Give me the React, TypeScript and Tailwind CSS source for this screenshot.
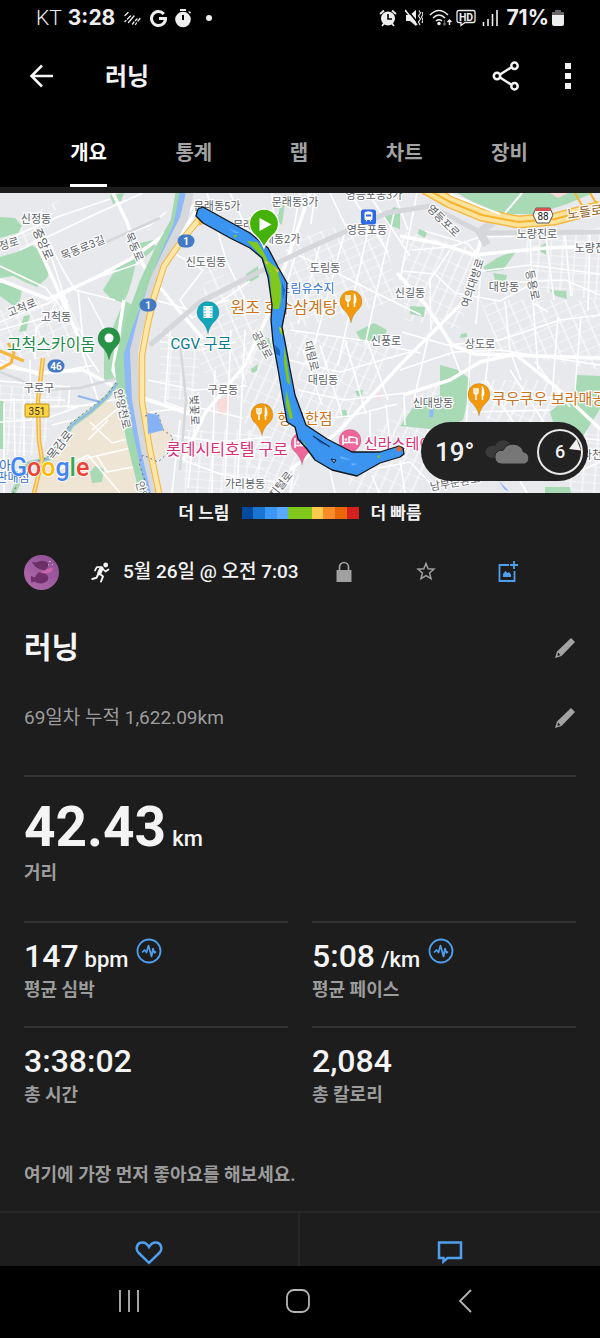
import React from "react";

type Point = { x: number; y: number };

const FONT = "font-['Roboto','Noto_Sans_CJK_KR',sans-serif]";

const TABS = ["개요", "통계", "랩", "차트", "장비"];

const PACE_COLORS = ["bg-[#004a9e]", "bg-[#1974d2]", "bg-[#3b96f4]", "bg-[#58a9ff]", "bg-[#80c81c]", "bg-[#80c81c]", "bg-[#fccb4d]", "bg-[#f98b28]", "bg-[#e9660c]", "bg-[#d3211f]"];

/* ---------- Map ---------- */

const PARKS = [
  "M0 217L15 218 22 226 18 233 0 238Z",
  "M0 257L17 252 32 245 43 253 50 270 47 278 37 287 27 283 13 276 0 278Z",
  "M0 283L13 283 22 290 20 300 15 307 0 296Z",
  "M103 290L117 267 137 258 132 280 128 293 123 303 110 298Z",
  "M110 195L124 193 121 201 113 204Z",
  "M140 243L153 240 156 247 140 262Z",
  "M24 316L30 315 26 331 19 332Z",
  "M104 350L124 300 132 305 116 345 117 377 104 381Z",
  "M457 193L593 193 567 204 536 214 505 214 485 209Z",
  "M483 267L497 258 518 249 503 270 487 272Z",
  "M493 273L507 275 505 283 496 283Z",
  "M440 365L458 370 470 379 470 392 463 420 440 430 400 426 417 402 440 395Z",
  "M577 375L600 376 600 409 583 436 555 428 550 412 573 392Z",
  "M384 216L394 207 400 209 400 229 388 225Z",
  "M282 197L286 195 282 225 277 221Z",
  "M246 274L258 266 259 277 247 284Z",
  "M257 330L264 336 259 344 251 338Z",
  "M256 341L269 338 272 349 264 352Z",
  "M356 332L374 323 387 330 383 340 362 342Z",
  "M410 306L425 307 424 317 410 314Z",
  "M540 246L546 243 546 255 540 251Z",
  "M550 290L566 291 567 299 556 296Z",
  "M251 369L258 364 257 371 252 373Z",
  "M355 391L363 390 362 396 357 396Z",
  "M341 410L346 410 348 417 343 418Z",
  "M419 229L427 232 425 238 418 234Z",
  "M461 334L467 333 467 337 460 338Z",
  "M545 487L570 487 571 493 545 493Z",
  "M90 472L95 466 104 469 102 482 92 483Z",
  "M0 400L4 402 4 449 0 449Z",
];

const BEIGE = [
  "M66 437L80 422 107 399 118 409 134 470 137 493 32 493 42 462Z",
  "M145 416L160 418 172 435 169 452 152 462Z",
];

const MINOR_ROADS = [
  "M0 243L28 230 60 216 110 199M20 250L100 212 143 193M40 222L75 330 98 400M70 256L150 225 166 212M0 322L48 303 90 280 143 262M0 266L46 288 78 330M48 240L63 270 75 290 115 300",
  "M78 290L84 350 99 372M88 297L105 330 100 344M0 330L55 315 68 300M55 303L49 318 36 328 35 359M0 360L38 375 95 365M30 360L31 420 0 422M0 381L70 387 68 408 118 399M0 400L65 400M4 403L4 493M14 398L15 460M24 400L24 456",
  "M45 407L98 405M50 417L78 407M52 425L76 419M90 422L112 443 131 438M88 440L108 420M80 460L130 448M58 470L88 455 120 493M96 455L107 472 133 467M92 430L121 406",
  "M172 252L203 270 180 300 192 318 226 298 250 281M155 300L190 310 230 300M160 332L200 350 236 342M170 330L165 402 200 415M160 342L210 345M148 380L195 390 247 386M150 412L195 407 243 418M170 435L220 442 270 437M165 453L220 474 290 484M180 420L172 493M198 392L188 488M215 370L212 493M231 330L225 480M245 330L237 493",
  "M207 193L226 260 250 310M230 193L243 221M272 193L275 240M300 193L290 250M315 193L311 224M330 193L346 227M350 193L388 252M368 193L410 256M394 193L408 230M417 193L400 280",
  "M286 250L325 267 370 290 421 315M297 250L285 290M321 241L298 324M345 231L313 350M370 222L338 365M394 213L365 345M290 330L360 340 421 353M289 360L340 372 410 352M298 390L344 400 405 393M304 420L350 416 397 404M303 350L322 405M320 345L342 415M345 340L366 414M367 340L388 400",
  "M412 250L450 247 480 237 520 236 600 229M425 231L468 244 482 260 476 324M403 271L435 274 455 293 500 301 530 285M450 250L430 280 431 330M530 237L533 303 548 312M546 237L554 300M565 236L571 296M590 230L588 310M520 282L565 280 600 295M482 271L530 265 600 274",
  "M402 332L447 345 500 340 560 320 600 315M400 370L454 352 500 350 600 365M429 333L414 400M450 345L460 372M471 340L466 430M490 345L483 400M505 301L510 351 521 380M533 300L538 370M558 317L552 398M581 316L575 390M478 397L600 398M473 412L550 410M486 380L515 425M510 370L545 424M535 362L570 407",
  "M370 411L370 448M386 404L390 443M404 397L405 425M348 474L410 462 430 483M330 470L335 493M372 475L379 493M400 460L405 493M440 475L438 493M295 464L290 493M575 438L600 440M560 480L600 462M520 481L527 493",
];

const MAJOR_ROADS = [
  "M113 193L126 220 143 265 170 300 203 339",
  "M0 280L48 299 95 278 132 258 160 238 200 200",
  "M35 240L58 290 84 350",
  "M124 300L113 370 126 400 145 455 156 493",
  "M200 205L166 259 150 306 138 343",
  "M0 365L40 373 83 370 125 392 190 414",
  "M290 470L340 430 400 365 465 300 478 250 482 235",
  "M397 273L426 305 452 345 475 354 600 358",
  "M310 193L270 310 245 365 205 413 183 460",
  "M400 236L437 243 475 255 545 248 600 246",
  "M403 395L450 380 480 362 515 354 555 386 600 429",
];

const ROUTE =
  "M196 216L198 209 203 207 230 222 250 233 268 248 278 267 287 283 286 307 282 327 285 342 290 369 295 395 306 425 327 439 352 452 380 452 399 446 403 448 404 454 400 457 380 463 357 476 332 470 315 460 307 449 298 439 295 427 287 422 283 399 278 369 273 342 271 320 272 305 268 277 262 258 250 248 230 238 203 223Z";

function MapText({
  at,
  size = 11,
  fill = "#5b6065",
  rotate = 0,
  weight = 400,
  anchor = "middle",
  children,
}: {
  at: Point;
  size?: number;
  fill?: string;
  rotate?: number;
  weight?: number;
  anchor?: "start" | "middle";
  children: string;
}) {
  return (
    <text
      x={at.x}
      y={at.y}
      fontSize={size}
      fontWeight={weight}
      fill={fill}
      stroke="#fff"
      strokeWidth={2.5}
      strokeLinejoin="round"
      paintOrder="stroke"
      textAnchor={anchor}
      dominantBaseline="central"
      transform={rotate ? `rotate(${rotate} ${at.x} ${at.y})` : undefined}
    >
      {children}
    </text>
  );
}

function Pin({ x, y, color, children }: { x: number; y: number; color: string; children: React.ReactNode }) {
  return (
    <g transform={`translate(${x} ${y})`}>
      <path d="M0 22C-1.500 15-4 12-7.500 8.500A11 11 0 1 1 7.500 8.500C4 12 1.500 15 0 22Z" fill={color} stroke="#0003" strokeWidth=".6" />
      {children}
    </g>
  );
}

const Fork = () => (
  <g stroke="#fff" strokeWidth="1.5" fill="none">
    <path d="M-5-6V-2Q-5 0-3 0T-1-2V-6M-3-6V6" />
    <path d="M3.500 6V-6Q5 -4 4.500 1H2.500" fill="#fff" />
  </g>
);

const Bed = () => (
  <g stroke="#fff" strokeWidth="1.600" fill="none">
    <path d="M-7-5V5M-7 2.500H7V5M7 2.500V-1Q7-3-1-3V2" />
    <circle cx="-4" cy="-.5" r="1.300" fill="#fff" stroke="none" />
  </g>
);

function Badge({ x, y, label }: { x: number; y: number; label: string }) {
  return (
    <g>
      <rect x={x - 8.5} y={y - 6.5} width="17" height="13" rx="6.500" fill="#4479c4" />
      <text x={x} y={y + 0.5} fill="#fff" fontSize="10" fontWeight="700" textAnchor="middle" dominantBaseline="central">
        {label}
      </text>
    </g>
  );
}

function RouteMap() {
  return (
    <svg viewBox="0 193 600 300" className="block w-full" role="img" aria-label="러닝 경로 지도">
      <defs>
        <pattern id="streetsA" width="13" height="9" patternUnits="userSpaceOnUse" patternTransform="rotate(-24)">
          <path d="M0 0H13M4 0V9" stroke="#fff" strokeWidth="1" />
        </pattern>
        <pattern id="streetsB" width="10" height="14" patternUnits="userSpaceOnUse" patternTransform="rotate(24)">
          <path d="M0 0H10M6 0V14" stroke="#fff" strokeWidth="1" />
        </pattern>
        <pattern id="streetsC" width="12" height="8" patternUnits="userSpaceOnUse" patternTransform="rotate(4)">
          <path d="M0 0H12M3 0V8" stroke="#fff" strokeWidth="1" />
        </pattern>
      </defs>
      <rect y="193" width="600" height="300" fill="#e8e9ed" />
      <path d="M0 230L60 200 35 260ZM0 310L65 295 90 350 0 365ZM205 250L265 330 240 400 200 370ZM290 240L380 215 400 300 290 330ZM480 300L600 300 600 370 500 352Z" fill="url(#streetsA)" />
      <path d="M240 350L290 330 300 493 250 493ZM295 330L400 350 340 430 300 410ZM400 230L480 250 460 330 405 320ZM345 455L440 380 420 493 350 493ZM480 380L560 380 545 424 485 420Z" fill="url(#streetsB)" />
      <path d="M0 385L65 390 40 455 0 455ZM180 430L270 430 270 493 185 493ZM525 235L600 230 600 300 530 290ZM160 340L200 350 195 400 160 400ZM570 430L600 430 600 493 560 490Z" fill="url(#streetsC)" />
      {BEIGE.map((d) => (
        <path key={d} d={d} fill="#eee5d5" />
      ))}
      {PARKS.map((d) => (
        <path key={d} d={d} fill="#a9dab6" />
      ))}
      <path d="M217 400L230 396 230 409 219 417ZM376 396L381 390 380 403ZM550 193L568 193 558 198Z" fill="#f9dcda" />
      <g fill="none" stroke="#fff" strokeLinejoin="round">
        {MINOR_ROADS.map((d) => (
          <path key={d} d={d} strokeWidth="1.600" />
        ))}
        {MAJOR_ROADS.map((d) => (
          <path key={d} d={d} strokeWidth="3.500" />
        ))}
      </g>

      {/* railways */}
      <g fill="none" stroke="#d5d7da">
        <path d="M150 345L200 302 253 275 300 252 387 213 430 206 482 233 600 232" strokeWidth="5" />
        <path d="M0 372L45 390 80 388 118 378 135 366M180 342L186 400 180 470M100 245L160 218" strokeWidth="2.500" />
        <path d="M487 245L480 232 493 222" strokeWidth="8" />
      </g>

      {/* river with its banks */}
      <g fill="none" strokeLinejoin="round">
        <path d="M182 193L177 222 160 253 146 283 129 330 121 365 125 400 133 440 146 493" stroke="#a2d8b0" strokeWidth="13" />
        <path d="M183 193L177 225 163 257 151 288 136 328 127 355 129 390 136 430 150 493" stroke="#8fb8f7" strokeWidth="7" />
        <path d="M190 193L184 218 167 252 154 280 143 315 134 350 136 400 145 450 155 493" stroke="#d6d8dc" strokeWidth="8" />
        <path d="M201 217L182 240 164 266 154 297 147 328 142 355 142 402 150 450 159 493" stroke="#f0b53c" strokeWidth="6.500" />
        <path d="M201 217L182 240 164 266 154 297 147 328 142 355 142 402 150 450 159 493" stroke="#fde7a8" strokeWidth="4.500" />
        <path d="M118 383L107 397 90 412 72 425 61 442 48 459 28 464 13 493" stroke="#a6d7b6" strokeWidth="5" />
        <path d="M118 383L107 397 90 412 72 425 61 442 48 459 28 464M78 396L100 402" stroke="#8fb5ee" strokeWidth="2" />
        <path d="M116 383L106 396 88 410 70 424 60 441 47 458 27 464 13 493M145 416L158 413 163 430 173 437 169 452 158 462 143 455 139 463 149 493" stroke="#6c727c" strokeWidth="1" strokeDasharray="2 3" />
      </g>
      <path d="M147 413L158 415 164 430 148 434Z" fill="#86b2f5" />
      <path d="M430 407L434 409 433 417 429 417ZM498 480L509 491 505 490Z" fill="#8fb8f7" />

      {/* trunk roads */}
      <g fill="none" strokeLinejoin="round">
        <path d="M425 188L450 202 482 215 518 222 555 219 600 207" stroke="#f5b942" strokeWidth="13" />
        <path d="M425 188L450 202 482 215 518 222 555 219 600 207" stroke="#fce39b" strokeWidth="10" />
        <path d="M425 188L450 202 482 215 518 222 555 219 600 207M575 193L584 209M590 193L598 206" stroke="#f7b32e" strokeWidth="2" />
        <path d="M450 194L487 209 500 214M505 213L522 193" stroke="#fff" strokeWidth="2" />
        <path d="M43 358L38 400 39 440 42 460 34 493" stroke="#f7b640" strokeWidth="4.500" />
        <path d="M43 358L38 400 39 440 42 460 34 493" stroke="#fde19a" strokeWidth="1.500" />
        <path d="M0 351L24 361M0 369L11 363 14 353 8 343M197 210L201 225" stroke="#f7b640" strokeWidth="3" />
      </g>

      {/* place labels */}
      <g>
        <MapText at={{ x: 36, y: 219 }}>신정동</MapText>
        <MapText at={{ x: 9, y: 244 }} rotate={-16}>정로</MapText>
        <MapText at={{ x: 43, y: 244 }} rotate={66} size={12}>중앙로</MapText>
        <MapText at={{ x: 83, y: 248 }} rotate={-22}>목동로3길</MapText>
        <MapText at={{ x: 134, y: 247 }} rotate={66}>목동로</MapText>
        <MapText at={{ x: 22, y: 308 }} rotate={-22}>고척로</MapText>
        <MapText at={{ x: 56, y: 317 }}>고척동</MapText>
        <MapText at={{ x: 206, y: 262 }}>신도림동</MapText>
        <MapText at={{ x: 217, y: 206 }}>문래동5가</MapText>
        <MapText at={{ x: 295, y: 202 }}>문래동3가</MapText>
        <MapText at={{ x: 277, y: 239 }}>문래동2가</MapText>
        <MapText at={{ x: 243, y: 225 }}>문래</MapText>
        <MapText at={{ x: 374, y: 195 }}>영등포동3가</MapText>
        <MapText at={{ x: 367, y: 230 }}>영등포동</MapText>
        <MapText at={{ x: 325, y: 268 }}>도림동</MapText>
        <MapText at={{ x: 410, y: 293 }}>신길동</MapText>
        <MapText at={{ x: 443, y: 221 }} rotate={45}>영등포로</MapText>
        <MapText at={{ x: 473, y: 283 }} rotate={-72}>여의대방로</MapText>
        <MapText at={{ x: 504, y: 287 }}>대방동</MapText>
        <MapText at={{ x: 532, y: 285 }} rotate={78}>등용로</MapText>
        <MapText at={{ x: 537, y: 234 }}>노량진로</MapText>
        <MapText at={{ x: 595, y: 248 }}>노량진동</MapText>
        <MapText at={{ x: 585, y: 212 }} rotate={-8} size={13} fill="#93622b">노들로</MapText>
        <MapText at={{ x: 386, y: 341 }}>신풍로</MapText>
        <MapText at={{ x: 480, y: 344 }}>상도로</MapText>
        <MapText at={{ x: 223, y: 390 }}>구로동</MapText>
        <MapText at={{ x: 323, y: 380 }}>대림동</MapText>
        <MapText at={{ x: 311, y: 356 }} rotate={76}>대림로</MapText>
        <MapText at={{ x: 262, y: 345 }} rotate={62}>공원로</MapText>
        <MapText at={{ x: 39, y: 388 }}>구로구</MapText>
        <MapText at={{ x: 60, y: 445 }} rotate={-52} size={12}>목감로</MapText>
        <MapText at={{ x: 122, y: 409 }} rotate={77}>안양천로</MapText>
        <MapText at={{ x: 144, y: 501 }} rotate={76}>안양천로</MapText>
        <MapText at={{ x: 194, y: 410 }} rotate={88}>벚꽃로</MapText>
        <MapText at={{ x: 245, y: 484 }}>가리봉동</MapText>
        <MapText at={{ x: 278, y: 489 }} rotate={-52}>디지털로</MapText>
        <MapText at={{ x: 433, y: 403 }}>신대방동</MapText>
        <MapText at={{ x: 455, y: 483 }} rotate={-10}>남부순환로</MapText>
        <MapText at={{ x: 597, y: 455 }}>사천로</MapText>
        <MapText at={{ x: 51, y: 344 }} size={16} fill="#1a8a4a">고척스카이돔</MapText>
        <MapText at={{ x: 201, y: 344 }} size={15} fill="#087b8c">CGV 구로</MapText>
        <MapText at={{ x: 307, y: 289 }} size={12} fill="#3170cc">도림유수지</MapText>
        <MapText at={{ x: 284, y: 307 }} size={16} fill="#cb7220">원조 호수삼계탕</MapText>
        <MapText at={{ x: 305, y: 419 }} size={15} fill="#cb7220">행복한점</MapText>
        <MapText at={{ x: 492, y: 399 }} size={15} fill="#cb7220" anchor="start">쿠우쿠우 보라매공원</MapText>
        <MapText at={{ x: 227, y: 449 }} size={16} fill="#d72e79">롯데시티호텔 구로</MapText>
        <MapText at={{ x: 364, y: 444 }} size={15} fill="#d72e79" anchor="start">신라스테이</MapText>
        <MapText at={{ x: -1, y: 465 }} size={13} fill="#3170cc">이아</MapText>
        <MapText at={{ x: 13, y: 478 }} size={12} fill="#3170cc">판매점</MapText>
      </g>

      <Badge x={186} y={241} label="1" />
      <Badge x={148} y={305} label="1" />
      <Badge x={56} y={366} label="46" />
      <rect x="25" y="404" width="24" height="13" rx="1" fill="#fdd342" stroke="#b99320" />
      <text x="37" y="411" fontSize="10" fill="#333" textAnchor="middle" dominantBaseline="central">351</text>
      <path d="M536 208H550L553 215 549 223H537L533 215Z" fill="#fff" stroke="#555" strokeWidth="1" />
      <path d="M536 208H550L551 211H535Z" fill="#d65353" />
      <text x="543" y="216" fontSize="10" fill="#222" textAnchor="middle" dominantBaseline="central">88</text>
      <rect x="361" y="209.500" width="15" height="15" rx="2.500" fill="#2c69e6" />
      <path d="M365 212.500Q368.500 211 372 212.500V219.500H365ZM366 221.500L367 219.500M371 221.500L370 219.500" fill="#fff" stroke="#fff" />
      <path d="M366 214.500H371V216.500H366Z" fill="#2c69e6" />

      <Pin x={109} y={338} color="#279347">
        <circle r="4.500" fill="#fff" />
      </Pin>
      <Pin x={208} y={312} color="#12a6bc">
        <path d="M-4.500-6H4.500V6H-4.500Z" fill="#fff" />
        <path d="M-3-5V5M3-5V5" stroke="#12a6bc" strokeDasharray="1.500 1.500" />
      </Pin>
      <Pin x={351} y={301} color="#f29a0c"><Fork /></Pin>
      <Pin x={262} y={414} color="#f29a0c"><Fork /></Pin>
      <Pin x={479} y={394} color="#f29a0c"><Fork /></Pin>
      <Pin x={302} y={443} color="#f0679b"><Bed /></Pin>
      <Pin x={350} y={440} color="#f0679b"><Bed /></Pin>

      {/* recorded route, coloured by pace */}
      <path d={ROUTE} fill="#3b94ef" />
      <path d="M247 241L257 242 263 251 268 261 277 268 281 285 281 300 279 309 273 309 271 295 270 277 263 258Z" fill="#80c81c" />
      <path d="M284 345L287 362 290 385 287 382 284 363ZM286 390L290 405 293 418 290 419 286 404ZM233 236L237 234 236 238ZM279 327L283 328 284 336 280 333ZM303 440L306 446 304 445ZM377 456L380 455 379 459Z" fill="#80c81c" />
      <path d="M265 261L269 263 266 264ZM274 268L279 270 278 273ZM279 327L282 329 281 331Z" fill="#f3c14a" />
      <path d="M275 345L280 350 280 356 276 354ZM282 282L285 290 283 300ZM312 435L331 447 320 443ZM300 438L303 444 301 444Z" fill="#1669c5" />
      <path d="M351 463L358 464 352 466ZM340 456L352 460 341 459ZM228 228L240 233 235 233Z" fill="#63b0ff" />
      <path d={ROUTE} fill="none" stroke="#10151b" strokeWidth="1.300" strokeLinejoin="round" />
      <path d="M331 459L336 460 334 463ZM313 436L330 447" fill="#8db7e8" stroke="#10151b" strokeWidth=".9" />
      <circle cx="399" cy="449" r="2.500" fill="#ed6524" />

      {/* start marker */}
      <g transform="translate(264 225)">
        <path d="M0 23C-2 17-5 14-9 10A14.500 14.500 0 1 1 9 10C5 14 2 17 0 23Z" fill="#43b309" stroke="#fff" strokeWidth="1.200" />
        <path d="M-4.500-7L7.500-.5-4.500 6Z" fill="#fff" />
      </g>

      <text x="10" y="476" fontFamily="Roboto" fontSize="25" fontWeight="500" stroke="#fff" strokeWidth="1.500" paintOrder="stroke">
        <tspan fill="#4285f4">G</tspan>
        <tspan fill="#ea4335">o</tspan>
        <tspan fill="#fbbc04">o</tspan>
        <tspan fill="#4285f4">g</tspan>
        <tspan fill="#34a853">l</tspan>
        <tspan fill="#ea4335">e</tspan>
      </text>
    </svg>
  );
}

function WeatherPill() {
  return (
    <div className="absolute right-3 bottom-3 flex h-[59px] w-[167px] items-center rounded-full bg-[#222] pr-[5px] pl-3.5 text-[#f1f1f1]">
      <span className="text-[26px] leading-8 font-medium">19°</span>
      <svg width="46" height="28" viewBox="0 0 46 28" className="ml-auto" aria-label="흐림">
        <path d="M7 20A6 6 0 0 1 6 8Q8 7 10 8A8.500 8.500 0 0 1 25 6L22 18Z" fill="#3a3a3a" />
        <path d="M16 26A7 7 0 0 1 14.500 12.500Q16 12 18 12.500A11 11 0 0 1 38.500 14A6.200 6.200 0 0 1 39.500 26Z" fill="#777" stroke="#222" />
      </svg>
      <span className="relative ml-1.5 flex size-[46px] items-center justify-center rounded-full border-2 border-[#e8e8e8] text-lg font-medium">
        6
        <svg width="12" height="12" viewBox="0 0 12 12" className="absolute top-2 right-0" aria-hidden="true">
          <path d="M7.500 0L12 11.500L0 10Z" fill="#f1f1f1" />
        </svg>
      </span>
    </div>
  );
}

/* ---------- Status bar ---------- */

function StatusBar() {
  return (
    <div className="flex h-9 items-center justify-between pr-9 pl-9 text-[#eee]">
      <div className="flex items-center">
        <span className="text-[21px] leading-6 font-light">KT</span>
        <span className="ml-1.5 font-['Inter',sans-serif] text-[21px] leading-6 font-bold">3:28</span>
        <svg width="18" height="16" viewBox="0 0 18 16" className="ml-2" fill="none" stroke="currentColor" strokeWidth="1.300" strokeLinecap="round" aria-hidden="true">
          <path d="M2 5.500L5 2.500M2 11.500L3 10.500M4.500 9L7.500 6M5.500 12.500L11 6M9.500 14L11 12M12.500 10.500L14 9M12.500 14.500L13.500 13M15 11L17 8.500" />
        </svg>
        <svg width="19" height="19" viewBox="0 0 19 19" className="ml-2" fill="none" stroke="currentColor" strokeWidth="3" aria-hidden="true">
          <path d="M14.800 5A7 7 0 1 0 16.500 9.500H10" />
        </svg>
        <svg width="18" height="20" viewBox="0 0 18 20" className="ml-1.5" aria-hidden="true">
          <path d="M6 1H12V3H6ZM14 3L17 4 16 6Z" fill="currentColor" />
          <circle cx="9" cy="11.500" r="7.800" fill="currentColor" />
          <path d="M9 7V12" stroke="#000" strokeWidth="2" />
        </svg>
        <span className="ml-3.5 size-1.5 rounded-full bg-[#eee]" />
      </div>
      <div className="flex items-center">
        <svg width="18" height="18" viewBox="0 0 18 18" aria-hidden="true">
          <circle cx="9" cy="9.500" r="7" fill="currentColor" />
          <path d="M1 5L5 1.500M17 5L13 1.500M3 17L5 14.500M15 17L13 14.500" stroke="currentColor" strokeWidth="1.800" />
          <path d="M9 5V10H13" fill="none" stroke="#000" strokeWidth="1.600" />
        </svg>
        <svg width="18" height="18" viewBox="0 0 18 18" className="ml-2" aria-hidden="true">
          <path d="M1 6H5L11 1V17L5 12H1Z" fill="currentColor" />
          <path d="M1.500 0L13 14" stroke="#000" strokeWidth="1.600" />
          <path d="M0 1L12 16" fill="none" stroke="currentColor" strokeWidth="1.500" />
          <path d="M14 1.500L15.500 4 13.500 7 15.500 10 13.500 13 15 16M17 3L18 5 16.500 8 18 11 17 14" fill="none" stroke="currentColor" strokeWidth="1.100" />
        </svg>
        <svg width="23" height="18" viewBox="0 0 23 18" className="ml-1.5" fill="none" stroke="currentColor" strokeWidth="1.600" aria-hidden="true">
          <path d="M1 6Q10-3 19 6M4 9Q10 3 16 9M7 12Q10 9.500 13 12" />
          <circle cx="10" cy="14.500" r="1" fill="currentColor" />
          <path d="M15.500 11V16M14 14.500L15.500 16 17 14.500" stroke="#666" strokeWidth="1.300" />
          <path d="M20.500 16V11M18.500 13L20.500 11 22.500 13" strokeWidth="1.500" />
        </svg>
        <svg width="20" height="18" viewBox="0 0 20 18" className="ml-1" aria-hidden="true">
          <path d="M3 1.500H17Q19 1.500 19 3.500V11.500Q19 13.500 17 13.500H9L5 16.500V13.500H3Q1 13.500 1 11.500V3.500Q1 1.500 3 1.500Z" fill="none" stroke="currentColor" strokeWidth="1.300" />
          <text x="10" y="11.500" fontSize="10.500" fontWeight="700" fill="currentColor" textAnchor="middle">HD</text>
        </svg>
        <svg width="16" height="18" viewBox="0 0 16 18" className="ml-1.5" stroke="currentColor" strokeWidth="1.600" aria-hidden="true">
          <path d="M1.500 17V13M6 17V10M10.500 17V5M15 17V1" />
        </svg>
        <span className="ml-2 font-['Inter',sans-serif] text-[21px] leading-6 font-bold">71%</span>
        <svg width="12" height="18" viewBox="0 0 12 18" className="ml-[3px]" aria-hidden="true">
          <path d="M3 1H9V3H12V7H0V3H3Z" fill="#666" />
          <path d="M0 6H12V15Q12 17 10 17H2Q0 17 0 15Z" fill="currentColor" />
        </svg>
      </div>
    </div>
  );
}

/* ---------- Shared bits ---------- */

const Pencil = () => (
  <svg width="20" height="20" viewBox="0 0 20 20" aria-hidden="true">
    <path d="M16 0L20 4 6.500 18 0 20 2 13.500Z" fill="#a3a3a3" />
    <path d="M3 14.500L5.500 17 2.500 18Z" fill="#1d1d1d" />
  </svg>
);

const Pulse = () => (
  <svg width="26" height="26" viewBox="0 0 26 26" fill="none" stroke="#4f9fee" aria-hidden="true">
    <circle cx="13" cy="13" r="11.500" strokeWidth="1.800" />
    <path d="M6 14.500L8.500 12 10.500 14.500 12.500 7.500 15.500 18.500 17 10.500 18.500 15 20 13.500" strokeWidth="1.700" strokeLinejoin="round" />
  </svg>
);

function Stat({ value, unit, label, pulse = false }: { value: string; unit?: string; label: string; pulse?: boolean }) {
  return (
    <div className="border-t-2 border-[#343434] pt-[11px] pb-6">
      <dd className="flex h-11 items-start leading-[44px] font-medium text-[#f4f4f4]">
        <span className="text-[32px]">{value}</span>
        {unit && <span className="ml-1.5 pt-1 text-[22px]">{unit}</span>}
        {pulse && (
          <button type="button" aria-label={`${label} 정보`} className="mt-1 ml-2">
            <Pulse />
          </button>
        )}
      </dd>
      <dt className="text-lg leading-6 font-bold text-[#9c9c9c]">{label}</dt>
    </div>
  );
}

export default function App() {
  return (
    <div className={`min-h-screen bg-black text-[#f4f4f4] ${FONT}`} lang="ko">
      <StatusBar />

      <header className="flex h-20 items-center pr-6 pl-7">
        <button type="button" aria-label="뒤로">
          <svg width="26" height="26" viewBox="0 0 26 26" fill="none" stroke="currentColor" strokeWidth="2.600" aria-hidden="true">
            <path d="M25 13H3M14 2.500L3.500 13 14 23.500" />
          </svg>
        </button>
        <h1 className="ml-[51px] pt-0.5 text-2xl leading-8 font-bold">러닝</h1>
        <button type="button" aria-label="공유" className="ml-auto">
          <svg width="28" height="30" viewBox="0 0 28 30" fill="none" stroke="currentColor" strokeWidth="2.500" aria-hidden="true">
            <path d="M8 13.500L19 6.500M8 16.500L19 23.500" />
            <circle cx="5" cy="15" r="3.200" />
            <circle cx="22.500" cy="4.800" r="3.200" />
            <circle cx="22.500" cy="25.200" r="3.200" />
          </svg>
        </button>
        <button type="button" aria-label="더보기" className="ml-10 flex w-4 flex-col items-center gap-1">
          <span className="size-1.5 bg-[#f4f4f4]" />
          <span className="size-1.5 bg-[#f4f4f4]" />
          <span className="size-1.5 bg-[#f4f4f4]" />
        </button>
      </header>

      <nav className="grid h-[71px] grid-cols-5 pr-[38px] pl-9">
        {TABS.map((tab, i) => (
          <a
            key={tab}
            href={`#tab-${i}`}
            aria-current={i === 0 ? "page" : undefined}
            className={
              i === 0
                ? "flex flex-col justify-end justify-self-center border-b-[3px] border-white pb-[15px] text-xl leading-8 font-bold text-white"
                : "mb-[3px] flex flex-col justify-end justify-self-center pb-[15px] text-xl leading-8 font-bold text-[#a3a3a3]"
            }
          >
            {tab}
          </a>
        ))}
      </nav>

      <main className="bg-[#1d1d1d] pt-1.5">
        <div className="relative">
          <RouteMap />
          <WeatherPill />
        </div>

        <div className="flex h-10 items-center justify-center text-[17px] leading-6 font-bold">
          <span>더 느림</span>
          <span className="mx-3 flex w-[117px]">
            {PACE_COLORS.map((color, i) => (
              <span key={i} className={`h-3 flex-1 ${color}`} />
            ))}
          </span>
          <span>더 빠름</span>
        </div>

        <div className="flex h-[78px] items-center pr-[51px] pl-6">
          <svg width="35" height="35" viewBox="0 0 35 35" role="img" aria-label="프로필">
            <defs>
              <linearGradient id="avatar" x1="1" y1="0" x2="0" y2="1">
                <stop offset="0" stopColor="#8d4c93" />
                <stop offset="1" stopColor="#b06cac" />
              </linearGradient>
            </defs>
            <circle cx="17.500" cy="17.500" r="17.500" fill="url(#avatar)" />
            <path d="M8 7Q12 8 15 6.500Q20 4.500 24 8Q25 13 21 15Q12 15 8 7Z" fill="#6c2f66" />
            <path d="M7 21L11 22.500Q13 17 17 17L23 19.500Q26 24 22 27Q17 30 10 26.500L7.500 28Q6.500 24 7 21Z" fill="#702e6b" />
            <path d="M14 16.500Q19 18 22 14.500L28 12.500Q30 15 27 17Q22 20 14 16.500Z" fill="#cd62ab" />
            <path d="M25 6.500H26.500M28 9.500H29M24 10H25" stroke="#e3b8dd" />
          </svg>
          <svg width="20" height="21" viewBox="0 0 20 21" className="ml-8" fill="none" stroke="currentColor" strokeLinecap="round" strokeLinejoin="round" aria-hidden="true">
            <circle cx="14.700" cy="3" r="2.400" fill="currentColor" stroke="none" />
            <path d="M10.500 6.500L8.300 11" strokeWidth="4.200" />
            <path d="M10 5L5.800 5.200 4 8.500M12 7L14.500 9.500 17.500 7.500" strokeWidth="1.700" />
            <path d="M7 12.500L5.500 15.800 1.300 17M9 12L12 14.500 10 19.500" strokeWidth="2" />
          </svg>
          <p className="ml-3 text-[19px] leading-6 font-medium whitespace-nowrap">5월 26일 @ 오전 7:03</p>
          <div className="ml-auto flex">
            <button type="button" aria-label="비공개" className="flex w-[82px] justify-center">
              <svg width="18" height="22" viewBox="0 0 18 22" aria-hidden="true">
                <path d="M1.500 9H16.500V21H1.500Z" fill="#a0a0a0" />
                <path d="M4.500 10V6A4.500 4.500 0 0 1 13.500 6V10" fill="none" stroke="#a0a0a0" strokeWidth="1.700" />
              </svg>
            </button>
            <button type="button" aria-label="즐겨찾기" className="flex w-[82px] justify-center">
              <svg width="20" height="20" viewBox="0 0 20 20" fill="none" stroke="#a0a0a0" strokeWidth="1.500" aria-hidden="true">
                <path d="M10 2.500L12.200 7.700 18 8.200 13.600 12 15 17.600 10 14.600 5 17.600 6.400 12 2 8.200 7.800 7.700Z" />
              </svg>
            </button>
            <button type="button" aria-label="사진 추가" className="flex w-[82px] justify-center">
              <svg width="20" height="22" viewBox="0 0 20 22" fill="none" stroke="#4f9fee" strokeWidth="1.800" aria-hidden="true">
                <path d="M11 4H1.500V20H16.500V10M16 0V8M12 4H20" />
                <path d="M5 16V13L7.500 10 9.500 12 11 11 13 13.500V16Z" fill="#4f9fee" stroke="none" />
              </svg>
            </button>
          </div>
        </div>

        <div className="flex h-[74px] items-center justify-between px-6">
          <h2 className="text-[30px] leading-10 font-bold">러닝</h2>
          <button type="button" aria-label="제목 편집" className="pr-px">
            <Pencil />
          </button>
        </div>
        <div className="flex h-[66px] items-center justify-between px-6">
          <p className="text-[19px] leading-6 text-[#9c9c9c]">69일차 누적 1,622.09km</p>
          <button type="button" aria-label="메모 편집" className="pr-px">
            <Pencil />
          </button>
        </div>

        <dl className="mx-6 mt-6">
          <div className="border-t-2 border-[#343434] pt-5 pb-9">
            <dd className="flex items-baseline text-[55px] leading-[60px] font-bold">
              42.43<span className="ml-1.5 text-[22px] leading-6 font-medium">km</span>
            </dd>
            <dt className="mt-1 text-lg leading-6 font-bold text-[#9c9c9c]">거리</dt>
          </div>
          <div className="grid grid-cols-2 gap-x-6">
            <Stat value="147" unit="bpm" label="평균 심박" pulse />
            <Stat value="5:08" unit="/km" label="평균 페이스" pulse />
            <Stat value="3:38:02" label="총 시간" />
            <Stat value="2,084" label="총 칼로리" />
          </div>
        </dl>

        <p className="mt-8 px-6 text-lg leading-6 font-bold text-[#9c9c9c]">여기에 가장 먼저 좋아요를 해보세요.</p>

        <div className="mt-6 grid grid-cols-2 border-t-2 border-[#262626]">
          <button type="button" aria-label="좋아요" className="flex justify-center border-r-2 border-[#262626] pt-7 pb-px">
            <svg width="28" height="24" viewBox="0 0 28 24" fill="none" stroke="#4f9fee" strokeWidth="2.500" aria-hidden="true">
              <path d="M14 21.800L3.300 11.500C.5 8.500 1.500 3 5.500 1.800C9 .8 12 2.500 14 6C16 2.500 19 .8 22.500 1.800C26.500 3 27.500 8.500 24.700 11.500Z" />
            </svg>
          </button>
          <button type="button" aria-label="댓글" className="flex justify-center pt-7 pb-px">
            <svg width="26" height="24" viewBox="0 0 26 24" fill="none" stroke="#4f9fee" strokeWidth="2.500" aria-hidden="true">
              <path d="M2 1.500H24V17H10.500L6.500 20.500V17H2Z" />
            </svg>
          </button>
        </div>
      </main>

      <footer className="flex h-[70px] items-center justify-between pr-[121px] pl-[115px] text-[#b5b5b5]">
        <button type="button" aria-label="최근 앱">
          <svg width="28" height="24" viewBox="0 0 28 24" stroke="currentColor" strokeWidth="1.800" aria-hidden="true">
            <path d="M5 1V23M14 1V23M23 1V23" />
          </svg>
        </button>
        <button type="button" aria-label="홈">
          <svg width="26" height="26" viewBox="0 0 26 26" fill="none" stroke="currentColor" strokeWidth="1.800" aria-hidden="true">
            <rect x="2" y="2" width="22" height="22" rx="7" />
          </svg>
        </button>
        <button type="button" aria-label="이전">
          <svg width="26" height="24" viewBox="0 0 26 24" fill="none" stroke="currentColor" strokeWidth="1.800" aria-hidden="true">
            <path d="M18 1L7 12 18 23" />
          </svg>
        </button>
      </footer>
    </div>
  );
}
